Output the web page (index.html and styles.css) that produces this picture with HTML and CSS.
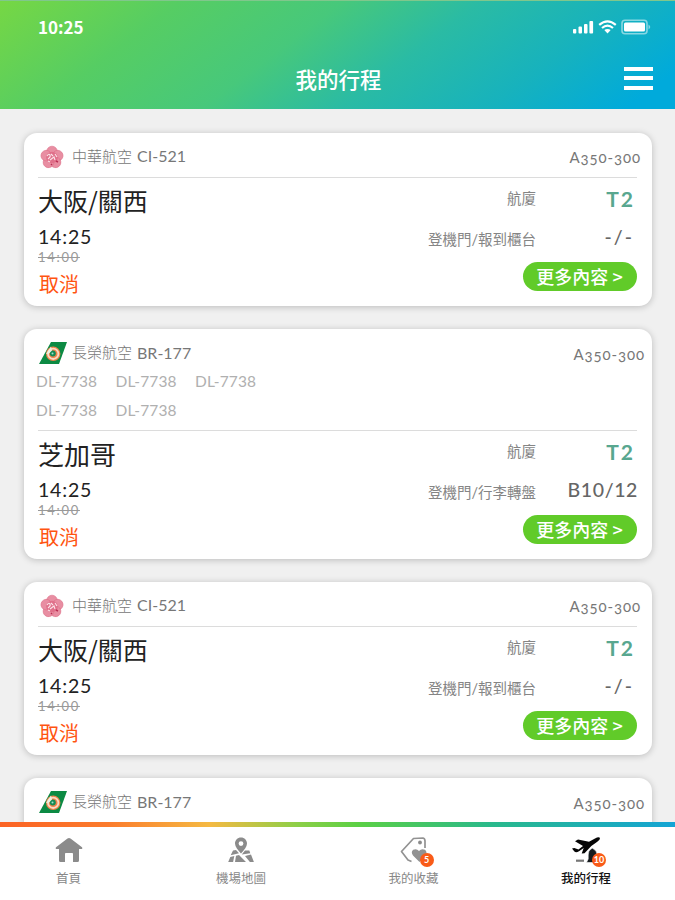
FILE: index.html
```html
<!DOCTYPE html>
<html lang="zh-Hant">

   <head>
      <title>我的行程</title>
      <meta charset="utf-8">
      <meta name="viewport" content="width=device-width, initial-scale=1.0">
      <link rel="stylesheet" href="styles.css">
   </head>

   <body>
      <!-- shared airline logos -->
      <svg class="defs" width="0" height="0">
         <symbol id="china" viewBox="0 0 26 24">
            <g fill="#e88ea2" stroke="#dd7089" stroke-width=".6">
               <ellipse cx="13" cy="6.500" rx="5.300" ry="5.300"/>
               <ellipse cx="13" cy="6.500" rx="5.300" ry="5.300" transform="rotate(72 13 12.5)"/>
               <ellipse cx="13" cy="6.500" rx="5.300" ry="5.300" transform="rotate(144 13 12.5)"/>
               <ellipse cx="13" cy="6.500" rx="5.300" ry="5.300" transform="rotate(216 13 12.5)"/>
               <ellipse cx="13" cy="6.500" rx="5.300" ry="5.300" transform="rotate(288 13 12.5)"/>
            </g>
            <circle cx="13" cy="12.5" r="5.8" fill="#e0708a"/>
            <path d="M8 11q2-3 3-1t-2 4M12 9l2 2M11 15l4-3 1 3M16 9l2 3M9 16l2 1" fill="none" stroke="#fbe3e8" stroke-width="1.1"/>
            <path d="M17 16l2 1M12 19l1 1" stroke="#b92f52" stroke-width="1.4"/>
         </symbol>
         <symbol id="eva" viewBox="0 0 28 22">
            <path d="M12 0H28L20 22H0Z" fill="#0c8a43"/>
            <circle cx="14.2" cy="11.8" r="7.2" fill="#f0834c"/>
            <circle cx="14.2" cy="11.8" r="5.2" fill="none" stroke="#fbdcc4" stroke-width="1.8"/>
            <circle cx="13.8" cy="11.5" r="3" fill="#168b55"/>
            <path d="M7 12l5-7.500 1 4-3 3z" fill="#e9f2e4"/>
            <circle cx="13.500" cy="11.5" r="1" fill="#a9dccb"/>
         </symbol>
      </svg>

      <header class="top">
         <div class="status">
            <span class="clock">10:25</span>
            <svg width="78" height="16" viewBox="0 0 78 16">
               <g fill="#fff">
                  <rect x="0" y="10" width="3.3" height="4.5" rx="1"/>
                  <rect x="5.5" y="7.5" width="3.5" height="7" rx="1"/>
                  <rect x="11" y="5" width="3.5" height="9.5" rx="1"/>
                  <rect x="16.4" y="2" width="3.7" height="12.5" rx="1"/>
                  <path d="M34.5 14.5l-3.2-3.4q3.2-2.2 6.4 0z"/>
                  <rect x="51" y="3.5" width="21" height="9" rx="1.5"/>
               </g>
               <path d="M26.2 5.8q8.3-7 16.6 0M29 9q5.5-4.6 11 0" fill="none" stroke="#fff" stroke-width="2.2"/>
               <rect x="49" y="1.2" width="25" height="13.6" rx="3" fill="none" stroke="#fff" stroke-opacity=".5" stroke-width="1.6"/>
               <path d="M75.5 5.5q3.5 2.5 0 5z" fill="#fff" fill-opacity=".5"/>
            </svg>
         </div>
         <div class="titlebar">
            <h1>我的行程</h1>
            <button class="menu"><i></i><i></i><i></i></button>
         </div>
      </header>

      <main class="list">
         <section class="card">
            <div class="head">
               <div class="airline">
                  <svg class="china"><use href="#china"/></svg>
                  <span class="name">中華航空</span><span class="no">CI-521</span>
                  <span class="plane">A350-300</span>
               </div>
            </div>
            <div class="body">
               <div class="left">
                  <h2 class="long">大阪/關西</h2>
                  <div class="time">14:25</div>
                  <div class="old">14:00</div>
                  <div class="state">取消</div>
               </div>
               <div class="right">
                  <div class="row terminal"><span>航廈</span><b>T2</b></div>
                  <div class="row gate"><span>登機門/報到櫃台</span><b class="none">-/-</b></div>
                  <button class="more">更多內容 <i>&gt;</i></button>
               </div>
            </div>
         </section>

         <section class="card eva-card">
            <div class="head">
               <div class="airline">
                  <svg class="eva"><use href="#eva"/></svg>
                  <span class="name">長榮航空</span><span class="no">BR-177</span>
                  <span class="plane">A350-300</span>
               </div>
               <div class="codes">
                  <span>DL-7738</span><span>DL-7738</span><span>DL-7738</span>
                  <span>DL-7738</span><span>DL-7738</span>
               </div>
            </div>
            <div class="body">
               <div class="left">
                  <h2>芝加哥</h2>
                  <div class="time">14:25</div>
                  <div class="old">14:00</div>
                  <div class="state">取消</div>
               </div>
               <div class="right">
                  <div class="row terminal"><span>航廈</span><b>T2</b></div>
                  <div class="row gate"><span>登機門/行李轉盤</span><b>B10/12</b></div>
                  <button class="more">更多內容 <i>&gt;</i></button>
               </div>
            </div>
         </section>

         <section class="card">
            <div class="head">
               <div class="airline">
                  <svg class="china"><use href="#china"/></svg>
                  <span class="name">中華航空</span><span class="no">CI-521</span>
                  <span class="plane">A350-300</span>
               </div>
            </div>
            <div class="body">
               <div class="left">
                  <h2 class="long">大阪/關西</h2>
                  <div class="time">14:25</div>
                  <div class="old">14:00</div>
                  <div class="state">取消</div>
               </div>
               <div class="right">
                  <div class="row terminal"><span>航廈</span><b>T2</b></div>
                  <div class="row gate"><span>登機門/報到櫃台</span><b class="none">-/-</b></div>
                  <button class="more">更多內容 <i>&gt;</i></button>
               </div>
            </div>
         </section>

         <section class="card eva-card">
            <div class="head">
               <div class="airline">
                  <svg class="eva"><use href="#eva"/></svg>
                  <span class="name">長榮航空</span><span class="no">BR-177</span>
                  <span class="plane">A350-300</span>
               </div>
            </div>
         </section>
      </main>

      <nav class="tabs">
         <a class="tab">
            <svg width="40" height="32" viewBox="0 0 40 32">
               <path d="M20 4q.8 0 1.5.6L33 13.3q1 1-.2 1.8H30v11.4q0 1.5-1.5 1.5H24v-8.3q0-.7-.8-.7h-6.4q-.8 0-.8.7V28h-4.500q-1.500 0-1.500-1.500V15.100H7.200q-1.200-.8-.2-1.800L18.500 4.600Q19.200 4 20 4z" fill="#8b8b8b"/>
            </svg>
            <span>首頁</span>
         </a>
         <a class="tab">
            <svg width="40" height="32" viewBox="0 0 40 32">
               <path fill-rule="evenodd" d="M20 3.500c3.500 0 6 2.700 6 6 0 3.300-3 6.500-6 10-3-3.500-6-6.700-6-10 0-3.300 2.500-6 6-6zM20 7.200a2.400 2.400 0 1 0 0 4.800 2.400 2.400 0 0 0 0-4.800z" fill="#8b8b8b"/>
               <path d="M12 16.500l3-.5 3 3.300-8.300 2zM9.300 23l4-1-1.200 6H7.200zM15 21.700l3-.7 7 7H14zM20.800 20.500l3.200-4 4.300 0 1 2.800zM24 22l6-1.600 2.900 7.600h-4z" fill="#8b8b8b"/>
            </svg>
            <span>機場地圖</span>
         </a>
         <a class="tab">
            <svg width="40" height="32" viewBox="0 0 40 32">
               <path d="M17.500 27.500L14 26 7.500 17.500 19.500 4.500 29 4q2 .5 2 3v7" fill="none" stroke="#929292" stroke-width="1.700" stroke-linejoin="round"/>
               <circle cx="26" cy="8.500" r="1.900" fill="#8b8b8b"/>
               <path d="M25.500 28l-6.500-6.500q-2.500-3.500.2-5.700 3.300-1.800 5.800 1.200 2.500-3 6-1.200 2.500 2.200.8 5.500z" fill="#929292"/>
            </svg>
            <em class="badge">5</em>
            <span>我的收藏</span>
         </a>
         <a class="tab active">
            <svg width="40" height="32" viewBox="0 0 40 32">
               <path d="M6 14.500l2.300-.5 4.200 1.500 4.500-3.400-8-4.800L12 5.500l11 2.200 6-3.300q4-2 5-.4.300 1.700-2.700 3.800l-6 4.200-6.800 7.200-2.800.4 2-5.500-4.700 3.200q-3 1.600-4.600.2z" fill="#050505"/>
               <path d="M10 26.700h8" stroke="#777" stroke-width="2.200"/>
               <path d="M25 15q1.500-1.700 2.500 0 3.500 1.500 3.500 6v4l1.500 3.500h-12l1.700-3.500v-4q0-4.500 2.800-6z" fill="#151b1e" stroke="#fff" stroke-width=".6"/>
            </svg>
            <em class="badge">10</em>
            <span>我的行程</span>
         </a>
      </nav>
   </body>

</html>
```
FILE: styles.css
```css
* {
   box-sizing: border-box;
}

body {
   margin: 0;
   height: 900px;
   display: flex;
   flex-direction: column;
   overflow: hidden;
   background-color: #f0f0f0;
   font-family: Lato, "Noto Sans CJK TC", sans-serif;
   color: #222;
}

h1, h2 {
   margin: 0;
}

button {
   border: 0;
   padding: 0;
   font-family: inherit;
}

.defs {
   position: absolute;
}

/* header */
.top {
   flex: none;
   height: 109px;
   border-top: 1px solid #80c78c;
   background: linear-gradient(143deg, #76d744 0%, #56cd63 22%, #47c87b 42%, #2abba4 59%, #17b2bd 77%, #00aadb 94%);
   color: #fff;
}

.status {
   height: 52px;
   padding: 0 24px 0 38px;
   display: flex;
   align-items: center;
   justify-content: space-between;
}

.clock {
   margin-top: -2px;
   font: bold 17px "Noto Sans CJK TC", sans-serif;
}

.titlebar {
   height: 52px;
   padding: 0 22px 0 50px;
   display: flex;
   align-items: center;
}

.titlebar h1 {
   flex: 1;
   padding: 2px 0 0 3px;
   text-align: center;
   font-size: 21.500px;
   font-weight: 500;
   line-height: 30px;
}

.menu {
   width: 29px;
   height: 23px;
   margin-top: -2px;
   display: flex;
   flex-direction: column;
   justify-content: space-between;
   background: none;
}

.menu i {
   height: 4px;
   background-color: #fff;
}

/* cards */
.list {
   flex: 1;
   min-height: 0;
   overflow: hidden;
   padding: 24px 23px 0 24px;
   display: flex;
   flex-direction: column;
   gap: 23px;
}

.card {
   flex: none;
   height: 173px;
   padding: 0 15px 0 14px;
   border-radius: 13px;
   background-color: #fff;
   box-shadow: 0 1px 7px rgba(0, 0, 0, 0.22);
}

.eva-card {
   height: 230px;
}

.head {
   height: 45px;
   border-bottom: 1px solid #dcdcdc;
}

.eva-card .head {
   height: 102px;
}

.airline {
   height: 47px;
   margin-right: -4px;
   display: flex;
   align-items: center;
   color: #777;
}

.eva-card .airline {
   height: 48px;
   margin-right: -8px;
}

.china {
   width: 26px;
   height: 24px;
   margin: 0 7px 0 1px;
}

.eva {
   width: 28px;
   height: 22px;
   margin: 0 5px 0 1px;
}

.name {
   margin-top: -3px;
   font-size: 15px;
   font-weight: 300;
}

.no {
   margin: -2px 0 0 5px;
   font-size: 16px;
}

.plane {
   margin: 1px 0 0 auto;
   font-size: 15px;
   letter-spacing: 0.9px;
   font-variant-numeric: oldstyle-nums;
}

.codes {
   width: 240px;
   margin: -10px 0 0 -2px;
   display: grid;
   grid-template-columns: repeat(3, 79.500px);
   line-height: 28.500px;
   font-size: 15.500px;
   letter-spacing: 0.1px;
   color: #b0b0b0;
}

.body {
   display: flex;
   justify-content: space-between;
}

.left h2 {
   height: 46px;
   line-height: 45px;
   font-family: "Noto Sans CJK TC", sans-serif;
   font-size: 26px;
   font-weight: 400;
}

.left h2.long {
   font-size: 25px;
}

.time {
   height: 25px;
   line-height: 25px;
   font-size: 19.500px;
   letter-spacing: 0.8px;
}

.old {
   height: 15px;
   padding-top: 1px;
   line-height: 15px;
   font-size: 13px;
   letter-spacing: 1.7px;
   color: #999;
   text-decoration: line-through;
   text-decoration-thickness: 1px;
}

.state {
   height: 40px;
   padding-left: 1px;
   line-height: 41px;
   font-size: 20px;
   color: #ff5410;
}

.right {
   width: 220px;
   display: flex;
   flex-direction: column;
}

.row {
   display: flex;
   justify-content: space-between;
   height: 40px;
   line-height: 40px;
   white-space: nowrap;
}

.row span {
   width: 119px;
   text-align: right;
   font-size: 14.500px;
   color: #858585;
}

.row b {
   color: #58a78f;
   font-size: 21px;
   letter-spacing: 2px;
}

.terminal b {
   padding-right: 2px;
}

.terminal {
   height: 42px;
   line-height: 42px;
}

.gate b {
   margin-top: -3px;
   margin-right: -1px;
   font-size: 19.500px;
   letter-spacing: 0.6px;
   font-weight: 500;
   color: #666;
}

.gate b.none {
   padding-right: 4px;
   letter-spacing: 2px;
}

.more {
   align-self: flex-end;
   width: 114px;
   height: 29px;
   margin-top: 2px;
   padding: 0 1px 1px 0;
   border-radius: 15px;
   background-color: #61cb29;
   color: #fff;
   font-family: "Noto Sans CJK TC", sans-serif;
   font-size: 18px;
   font-weight: 500;
   line-height: 26px;
   white-space: nowrap;
}

.more i {
   font-style: normal;
}

/* bottom tabs */
.tabs {
   flex: none;
   height: 78px;
   padding-top: 5px;
   display: grid;
   grid-template-columns: 137px 208px 137px 208px;
   background: linear-gradient(90deg, #fb6324 0%, #fb7b2c 16%, #f5b942 31%, #8dcf47 44%, #5bd044 53%, #29b98c 73%, #14a4d5 100%) top / 100% 5px no-repeat #fff;
}

.tab {
   position: relative;
   display: flex;
   flex-direction: column;
   align-items: center;
   padding-top: 7px;
   color: #888;
   font-size: 12.500px;
   line-height: 25px;
}

.tab svg {
   flex: none;
}

.active {
   color: #111;
   font-weight: 500;
}

.badge {
   position: absolute;
   left: calc(50% + 6px);
   top: 26px;
   width: 14px;
   height: 14px;
   border-radius: 50%;
   background-color: #f95b18;
   color: #fff;
   text-align: center;
   font-style: normal;
   font-size: 9px;
   line-height: 14px;
   font-weight: bold;
}
```
